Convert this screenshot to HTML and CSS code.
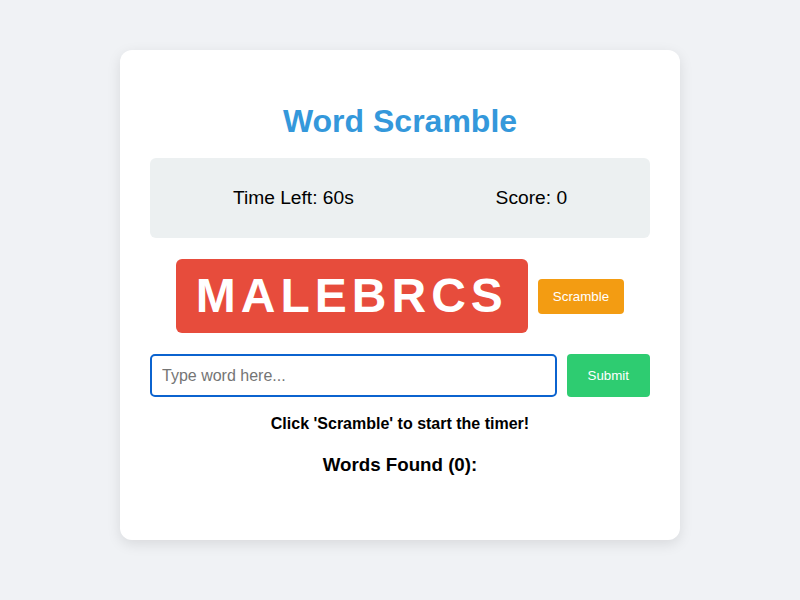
FILE: index.html
```html
<!DOCTYPE html>
<html lang="en">

<head>
  <meta charset="UTF-8">
  <meta name="viewport" content="width=device-width, initial-scale=1.0">
  <title>Word Scramble</title>
  <link rel="stylesheet" href="styles.css">
</head>

<body>
  <section class="game">
    <h1>Word Scramble</h1>
    <div class="stats">
      <span class="stat">Time Left: 60s</span>
      <span class="stat">Score: 0</span>
    </div>
    <div class="word-row">
      <div class="scrambled">MALEBRCS</div>
      <button type="button" class="scramble-btn">Scramble</button>
    </div>
    <form class="guess" action="">
      <input type="text" class="guess-input" placeholder="Type word here...">
      <button type="submit" class="submit-btn">Submit</button>
    </form>
    <p class="message">Click 'Scramble' to start the timer!</p>
    <h3 class="found">Words Found (0):</h3>
    <ul class="found-list"></ul>
  </section>
</body>

</html>
```

FILE: styles.css
```css
body {
  margin: 0;
  padding: 50px 0 60px;
  background: #f0f2f5;
  font-family: "Liberation Sans", Arial, sans-serif;
}

.game {
  width: 500px;
  height: 430px;
  margin: 0 auto;
  padding: 30px;
  background: #fff;
  border-radius: 12px;
  box-shadow: 0 4px 14px rgba(0, 0, 0, 0.1);
  text-align: center;
}

h1 {
  color: #3498db;
  font-size: 32px;
  margin: 23px 0 18px;
}

.stats {
  display: flex;
  justify-content: space-around;
  align-items: center;
  height: 80px;
  padding: 0 12px;
  background: #ecf0f1;
  border-radius: 6px;
  font-size: 19.2px;
  color: #000;
}

.word-row {
  display: flex;
  justify-content: center;
  align-items: center;
  gap: 10px;
  margin: 21px 0;
}

.scrambled {
  background: #e74c3c;
  color: #fff;
  font-size: 48px;
  font-weight: bold;
  line-height: 54px;
  letter-spacing: 5px;
  padding: 10px 20px;
  border-radius: 6px;
}

.scramble-btn,
.submit-btn {
  border: none;
  color: #fff;
  font-family: "Liberation Sans", Arial, sans-serif;
  font-size: 13.33px;
  border-radius: 4px;
  cursor: pointer;
}

.scramble-btn {
  background: #f39c12;
  padding: 10px 15px;
}

.guess {
  display: flex;
  gap: 10px;
  margin: 0;
}

.guess-input {
  flex: 1;
  height: 43px;
  box-sizing: border-box;
  padding: 10px;
  border: 2px solid #0b63cf;
  border-radius: 5px;
  font-family: "Liberation Sans", Arial, sans-serif;
  font-size: 16px;
  outline: none;
}

.guess-input::placeholder {
  color: #757575;
}

.submit-btn {
  background: #2ecc71;
  padding: 0 21px;
}

.message {
  font-weight: bold;
  font-size: 16px;
  margin: 18px 0 21px;
}

.found {
  font-size: 18.72px;
  margin: 0;
}

.found-list {
  list-style: none;
  padding: 0;
  margin: 0;
}
```
